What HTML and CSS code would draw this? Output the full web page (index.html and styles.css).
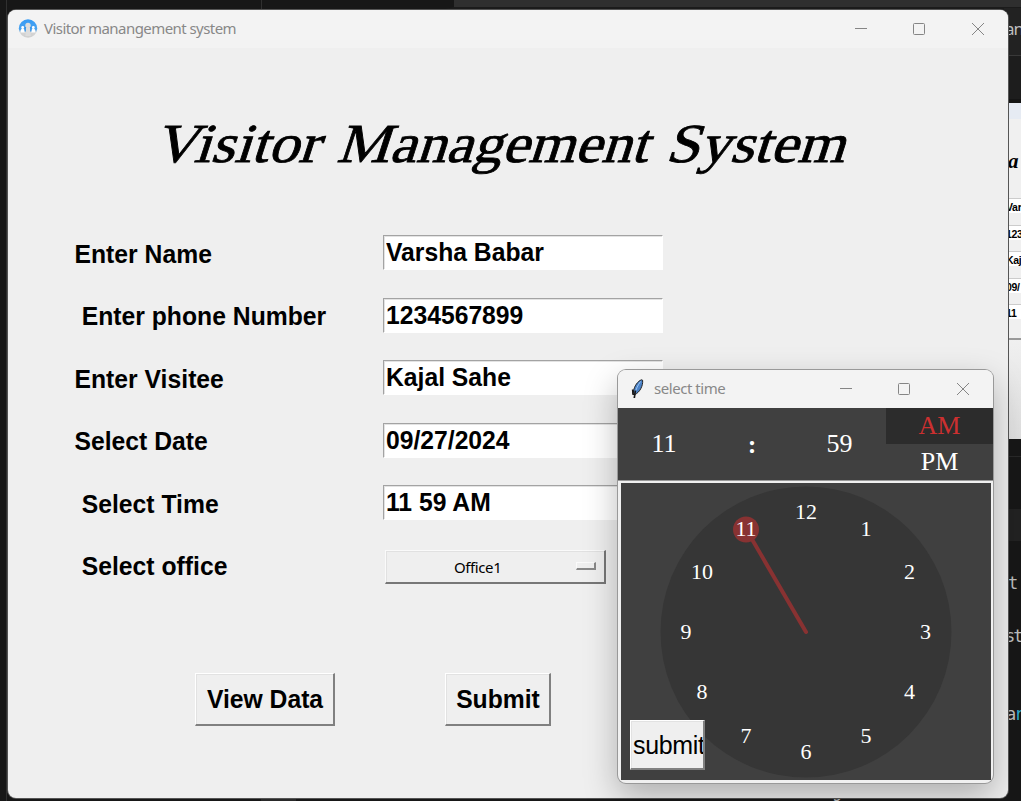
FILE: index.html
```html
<!DOCTYPE html>
<html lang="en">
<head>
<meta charset="utf-8">
<title>Visitor manangement system</title>
<link rel="stylesheet" href="styles.css">
</head>
<body>
<div class="desktop">
  <div class="editor-left"></div>
  <div class="editor-tab"></div>
  <div class="editor-right">
    <div class="code top-code">an</div>
    <div class="tab-strip"></div>
    <div class="preview">
      <div class="preview-bar"></div>
      <div class="preview-title">a</div>
      <div class="preview-field">Var</div>
      <div class="preview-field">123</div>
      <div class="preview-field">Kaj</div>
      <div class="preview-field">09/</div>
      <div class="preview-field">11</div>
      <div class="preview-rule"></div>
    </div>
    <div class="panel-head"></div>
    <div class="panel-tabs"></div>
    <div class="code c1">t</div>
    <div class="code c2">st</div>
    <div class="code c3">a<span>r</span></div>
  </div>
  <div class="code bottom-code">g</div>
  <div class="bottom-mark"></div>

  <main class="window main-window">
    <header class="titlebar">
      <svg class="app-icon" width="20" height="20" viewBox="0 0 20 20">
        <defs><linearGradient id="sky" x1="0" y1="0" x2="0" y2="1"><stop offset="0" stop-color="#369bf5"/><stop offset=".55" stop-color="#4aa3ef"/><stop offset=".72" stop-color="#d4d4d4"/><stop offset="1" stop-color="#d0d0d0"/></linearGradient></defs>
        <circle cx="10" cy="9.500" r="9.200" fill="url(#sky)"/>
        <circle cx="10" cy="6.500" r="2.700" fill="#ddd"/><path d="M7.400 17V11q0-3 2.600-3t2.600 3v6z" fill="#ddd"/>
        <circle cx="4.700" cy="8.500" r="1.400" fill="#fff"/><circle cx="15.300" cy="8.500" r="1.400" fill="#fff"/>
        <path d="M2.500 13.500q0-4 2.200-4t2.100 4zM13.200 13.500q0-4 2.100-4t2.200 4z" fill="#fff"/>
        <path d="M7.200 8v4.500M12.800 8v4.500" stroke="#2f91ea" stroke-width="1.200"/>
      </svg>
      <span class="caption main-caption">Visitor manangement system</span>
      <svg class="controls" width="118" height="14" viewBox="0 0 118 14" fill="none" stroke="#858585"><path d="M0 7.500H12"/><rect x="58.500" y="2.500" width="11" height="11" rx="1"/><path d="M117 2L129 14M129 2L117 14"/></svg>
    </header>
    <svg class="heading" width="720" height="70" viewBox="0 0 720 70">
      <g transform="translate(-7 51) skewX(-18)">
        <text x="-2" textLength="165" lengthAdjust="spacingAndGlyphs">Visitor</text>
        <text x="181" textLength="311" lengthAdjust="spacingAndGlyphs">Management</text>
        <text x="510" textLength="179" lengthAdjust="spacingAndGlyphs">System</text>
      </g>
    </svg>
    <div class="form">
      <label>Enter Name</label><div class="entry"><b>Varsha Babar</b></div>
      <label class="inset">Enter phone Number</label><div class="entry"><b>1234567899</b></div>
      <label>Enter Visitee</label><div class="entry"><b>Kajal Sahe</b></div>
      <label>Select Date</label><div class="entry"><b>09/27/2024</b></div>
      <label class="inset">Select Time</label><div class="entry"><b>11 59 AM</b></div>
      <label class="inset">Select office</label><div class="option"><span>Office1</span><i></i></div>
    </div>
    <div class="actions">
      <div class="button view"><b>View Data</b></div>
      <div class="button send"><b>Submit</b></div>
    </div>
  </main>

  <section class="window popup">
    <header class="titlebar">
      <svg class="feather" width="14" height="20" viewBox="0 0 14 20">
        <path d="M10.500.8C7 2 3 7 2.400 13l1.500 2.500C8.500 13.500 12.300 7 11.600 1.200z" fill="#4b83c9" stroke="#222" stroke-width="1"/>
        <path d="M9.500 2.500C7 6 5 10 3.800 15" fill="none" stroke="#9bc5f3"/><path d="M1.700 10.500L2 15l2 .5M4.400 11.500L3.300 19" fill="none" stroke="#171717" stroke-width="1.700"/>
      </svg>
      <span class="caption popup-caption">select time</span>
      <svg class="controls" width="118" height="14" viewBox="0 0 118 14" fill="none" stroke="#858585"><path d="M0 7.500H12"/><rect x="58.500" y="2.500" width="11" height="11" rx="1"/><path d="M117 2L129 14M129 2L117 14"/></svg>
    </header>
    <div class="time">
      <span class="hour">11</span><span class="colon">:</span><span class="minute">59</span>
      <div class="period"><span class="am">AM</span><span>PM</span></div>
    </div>
    <div class="clock">
      <svg width="370" height="297" viewBox="621 483 370 297">
        <circle cx="806" cy="632" r="145.500" fill="#363636"/>
        <path d="M806 632L746 529" stroke="#883232" stroke-width="4" stroke-linecap="round"/>
        <circle cx="746" cy="529.500" r="13" fill="#883232"/>
        <g class="numerals">
          <text x="806" y="519">12</text><text x="866" y="535.500">1</text><text x="909.500" y="579">2</text>
          <text x="925.500" y="639">3</text><text x="909.500" y="699">4</text><text x="866" y="743">5</text>
          <text x="806" y="759">6</text><text x="746" y="743">7</text><text x="702" y="699">8</text>
          <text x="686" y="639">9</text><text x="702" y="579">10</text><text x="746" y="535.500">11</text>
        </g>
      </svg>
      <div class="button small"><span>submit</span></div>
    </div>
  </section>
</div>
</body>
</html>
```
FILE: styles.css
```css
* { box-sizing: border-box; }
body { margin: 0; background: #181818; font-family: "Liberation Sans", Arial, sans-serif; }
.desktop { position: relative; width: 1021px; height: 801px; overflow: hidden; background: #171717; }
.editor-left { position: absolute; left: 6px; top: 0; width: 256px; height: 801px; border-left: 1px solid #303030; border-right: 1px solid #303030; }
.editor-tab { position: absolute; left: 445px; top: 0; right: 0; height: 9px; background: #2f2f2f; border-left: 9px solid #171717; border-bottom: 2px solid #1b1b1b; }
.editor-right { position: absolute; left: 1004px; top: 8px; width: 17px; height: 793px; overflow: hidden; background: #171717; }
.code { position: absolute; color: #bdbdbd; font: 17px/20px "DejaVu Sans Mono", monospace; white-space: nowrap; }
.top-code { left: 0; top: 0; width: 20px; height: 48px; padding: 11px 0 0 1px; background: #222; border-bottom: 1px solid #393939; font: 17px/20px "Noto Sans", sans-serif; letter-spacing: -1px; }
.tab-strip { margin-top: 48px; height: 47px; background: #1d1d1d; border-bottom: 4px solid #151515; }
.preview { height: 336px; background: linear-gradient(#f0f0f0 70%, #dedede); font-weight: bold; overflow: hidden; }
.preview-bar { height: 16px; background: #e6ebf3; }
.preview-title { height: 79px; padding: 31px 0 0 4px; font: italic bold 21px/23px "Liberation Serif", serif; }
.preview-field { height: 15px; margin-bottom: 11.600px; padding-left: 2px; background: white; border-top: 1px solid #ccc; font: bold 10.500px/16px "Liberation Sans", sans-serif; letter-spacing: -.3px; white-space: nowrap; }
.preview-rule { height: 9px; border-bottom: 2px solid #999; }
.panel-head { height: 18px; border-bottom: 1px solid #292929; }
.panel-tabs { margin-top: 52px; height: 32px; background: #222; }
.c1 { left: 4px; top: 565px; }
.c2 { left: 1px; top: 618px; letter-spacing: -2px; }
.c3 { left: 2px; top: 696px; letter-spacing: -2px; }
.c3 span { color: #2aa9c9; }
.bottom-code { left: 832px; top: 781px; }
.bottom-mark { position: absolute; left: 261px; top: 798px; width: 35px; height: 3px; background: #292929; }
.window { position: absolute; overflow: hidden; }
.main-window { left: 8px; top: 10px; width: 1000px; height: 788px; border-radius: 8px; background: #efefef; box-shadow: 0 0 0 1px #555; }
.titlebar { display: flex; align-items: center; height: 38px; background: #f3f3f3; }
.app-icon { margin-left: 10px; }
.caption { margin: 0 0 2px 6px; color: #888; font: 15px/20px "Noto Sans", sans-serif; white-space: nowrap; }
.main-caption { letter-spacing: -.56px; }
.popup-caption { margin-left: 9px; letter-spacing: -.45px; }
.controls { margin: 0 35px 2px auto; overflow: visible; }
.heading { display: block; margin: 63px 0 0 154px; overflow: visible; }
.heading text { font: 55px "Liberation Serif", serif; fill: #000; stroke: #000; stroke-width: .8px; }
.form { display: grid; grid-template-columns: 309px 280px; grid-auto-rows: 62.500px; margin: 45px 0 0 66px; }
.form label, .button b, .entry b { font-size: 24.700px; line-height: 36px; font-weight: bold; white-space: nowrap; transform: scaleY(1.050); transform-origin: left 27px; }
.form label { margin-top: 8.600px; padding-top: 2px; padding-left: .5px; letter-spacing: .02px; }
.form .inset { padding-left: 7.700px; }
.entry { height: 35px; margin-top: 9.300px; background: #fff; border: 1px solid #fff; border-top-color: #a3a3a3; border-left-color: #a3a3a3; box-shadow: inset 1px 1px #e3e3e3; }
.entry b { display: block; padding: 0 0 0 2px; line-height: 34px; transform-origin: left 26px; }
.option { width: 221px; height: 34px; margin: 11px 0 0 2px; display: flex; align-items: center; justify-content: space-between; padding: 0 8px 0 67px; border: 1px solid #fafafa; border-right: 2px solid #777; border-bottom: 2px solid #777; box-shadow: inset 1px 1px #e1e1e1; }
.option span { padding: 1px 0 0 1px; font: 15px/20px "Noto Sans", sans-serif; letter-spacing: -.4px; }
.option i { width: 20px; height: 8px; border: 1px solid #fafafa; border-right: 2px solid #888; border-bottom: 2px solid #888; }
.actions { display: flex; gap: 110px; margin: 72px 0 0 187px; }
.button { display: flex; align-items: center; justify-content: center; background: #efefef; border: 1px solid #fff; border-right: 2px solid #808080; border-bottom: 2px solid #808080; box-shadow: inset 1px 1px #e2e2e2; }
.button b { padding: 1px 0 0 1px; }
.view { width: 140px; height: 53px; }
.send { width: 106px; height: 53px; }
.popup { left: 618px; top: 370px; width: 375px; height: 413px; background: #f0f0f0; border-radius: 8px; box-shadow: 0 0 0 1px #999, 0 13px 34px rgba(0,0,0,.28); }
.feather { margin-left: 13px; }
.time { display: grid; grid-template-columns: 92px 84px 92px 1fr; height: 73px; align-items: center; justify-items: center; color: #fff; background: #404040; border-bottom: 1px solid #999; font: 26px "Liberation Serif", serif; }
.colon { padding: 2px 0 0; font-weight: bold; }
.minute { padding-right: 1px; }
.period { display: grid; grid-template-rows: 36px 36px; justify-self: stretch; text-align: center; line-height: 36px; }
.am { color: #cc3030; background: #2c2c2c; }
.clock { position: relative; width: 370px; height: 297px; margin: 2px 0 0 3px; background: #404040; }
.clock svg { display: block; }
.numerals { fill: #fff; font: 22px "Liberation Serif", serif; text-anchor: middle; }
.small { position: absolute; left: 9px; top: 237px; width: 75px; height: 50px; overflow: hidden; justify-content: flex-start; padding-left: 2px; }
.small span { padding-top: 1px; font-size: 25px; letter-spacing: -.35px; transform: scaleY(1.050); }
```
